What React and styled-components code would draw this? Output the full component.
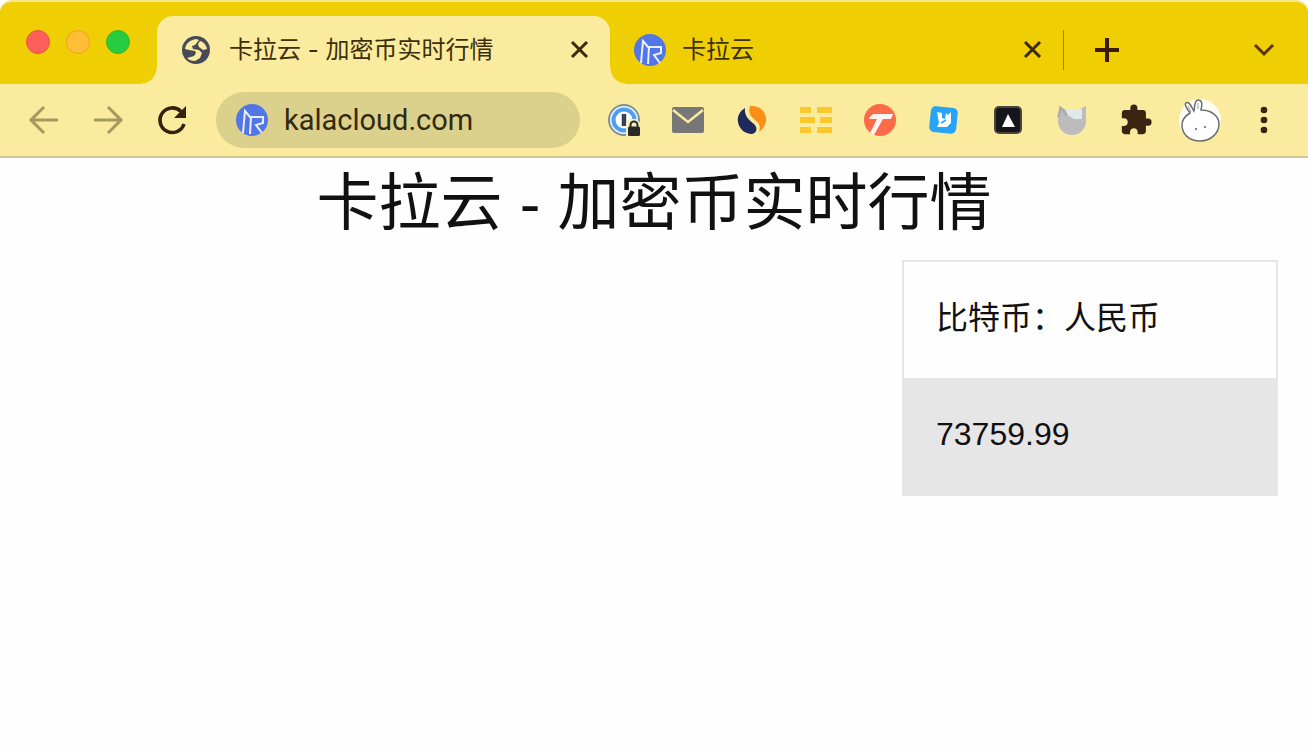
import styled, { createGlobalStyle } from "styled-components";
import { MdExtension } from "react-icons/md";

const extensions = [
    { name: "1Password", icon: <PasswordIcon /> },
    { name: "Mail", icon: <MailIcon /> },
    { name: "SimilarWeb", icon: <SwirlIcon /> },
    { name: "Stripes", icon: <StripesIcon /> },
    { name: "Toby", icon: <RoundTIcon /> },
    { name: "Notes", icon: <BlueNoteIcon /> },
    { name: "Vercel", icon: <BlackTileIcon /> },
    { name: "Cat", icon: <CatIcon /> },
    { name: "Extensions", icon: <MdExtension size={34} color="#3a2412" /> },
    { name: "Profile", icon: <RabbitIcon /> },
    { name: "Menu", icon: <DotsIcon /> },
];

export default function App() {
    return <Browser>
                <GlobalStyle />

                <TabStrip>
                    <WindowButtons>
                        <WindowButton aria-label="Close window" $fill="#ff5f5a" $edge="#e8543c" />
                        <WindowButton aria-label="Minimize window" $fill="#ffbd38" $edge="#eda21c" />
                        <WindowButton aria-label="Zoom window" $fill="#27cb3f" $edge="#3fb51c" />
                    </WindowButtons>
                    <Tab $active>
                        <GlobeIcon />
                        <TabTitle>卡拉云 - 加密币实时行情</TabTitle>
                        <TabClose aria-label="Close tab"><CrossIcon /></TabClose>
                    </Tab>
                    <Tab>
                        <KalaIcon />
                        <TabTitle>卡拉云</TabTitle>
                        <TabClose aria-label="Close tab"><CrossIcon /></TabClose>
                    </Tab>
                    <StripButton aria-label="New tab"><PlusIcon /></StripButton>
                    <StripButton aria-label="Search tabs" $last><ChevronIcon /></StripButton>
                </TabStrip>

                <Toolbar>
                    <ToolButton aria-label="Back"><ArrowIcon /></ToolButton>
                    <ToolButton aria-label="Forward"><ArrowIcon forward /></ToolButton>
                    <ToolButton aria-label="Reload"><ReloadIcon /></ToolButton>
                    <AddressBar>
                        <KalaIcon />
                        <input type="text" aria-label="Address" defaultValue="kalacloud.com" />
                    </AddressBar>
                    {extensions.map((ext) => (
                        <ToolButton key={ext.name} aria-label={ext.name}>{ext.icon}</ToolButton>
                    ))}
                </Toolbar>

                <Page>
                    <Title>卡拉云 - 加密币实时行情</Title>
                    <PriceCard>
                        <CardHeader>比特币：人民币</CardHeader>
                        <CardValue>73759.99</CardValue>
                    </PriceCard>
                </Page>
    </Browser>
}

function GlobeIcon() {
    return <svg width="32" height="32" viewBox="0 0 32 32">
                <circle cx="15" cy="16" r="14" fill="#474b58" />
                <path d="M4 15C5 9 9 6 15 5l3 1-4 5-3 1 1 3 6 1 3 3-2 5-5 3c-4 0-6-1-8-3l7-2 2-3-1-2-6-1z" fill="#fbeb9f" />
                <path d="M19 7c4 1 6 4 7 8l-4 1-4-3-1-3z" fill="#fbeb9f" />
    </svg>
}

function KalaIcon() {
    return <svg width="32" height="32" viewBox="0 0 32 32">
                <circle cx="16" cy="16" r="16" fill="#5276e6" />
                <path d="M7 29L9 7l5 6h13v6l-7 2 6 8M15 13l-1 17" fill="none" stroke="#e9effc" strokeWidth="2" />
    </svg>
}

function CrossIcon() {
    return <svg width="20" height="20" viewBox="0 0 20 20">
                <path d="M2 2l15 15M17 2L2 17" stroke="#3d2a0a" strokeWidth="3" />
    </svg>
}

function PlusIcon() {
    return <svg width="24" height="24" viewBox="0 0 24 24">
                <path d="M12 0v24M0 12h24" stroke="#3a1c08" strokeWidth="4" />
    </svg>
}

function ChevronIcon() {
    return <svg width="24" height="24" viewBox="0 0 24 24">
                <path d="M3 7l9 9 9-9" fill="none" stroke="#5a3304" strokeWidth="3" />
    </svg>
}

function ArrowIcon({ forward }) {
    return <svg width="32" height="32" viewBox="0 0 32 32">
                <path
                    d={forward ? "M2 16h26M16 3l13 13-13 13" : "M30 16H4M16 3L3 16l13 13"}
                    fill="none" stroke="#a5985c" strokeWidth="3"
                />
    </svg>
}

function ReloadIcon() {
    return <svg width="32" height="32" viewBox="0 0 32 32">
                <path d="M28 20A12.3 12.3 0 1 1 25 7.5" fill="none" stroke="#33220d" strokeWidth="3.6" />
                <path d="M30 2v12H18z" fill="#33220d" />
    </svg>
}

function PasswordIcon() {
    return <svg width="32" height="32" viewBox="0 0 32 32">
                <circle cx="16" cy="16" r="15" fill="#eef3fb" stroke="#7d9398" strokeWidth="2" />
                <circle cx="16" cy="16" r="10.5" fill="#fff" stroke="#4b9df5" strokeWidth="4" />
                <path d="M16 10v12" stroke="#39424c" strokeWidth="4.5" />
                <path d="M18 19l3-4h8l3 4v13H18z" fill="#f5edc4" />
                <path d="M22.5 23v-2a3.5 3.5 0 0 1 7 0v2" fill="none" stroke="#2c2a26" strokeWidth="2" />
                <rect x="20" y="22.5" width="12" height="9.5" rx="1.5" fill="#2c2a26" />
    </svg>
}

function MailIcon() {
    return <svg width="32" height="26" viewBox="0 0 32 26">
                <rect width="32" height="26" rx="2" fill="#777" />
                <path d="M1 3l15 12L31 3" fill="none" stroke="#fbeb9f" strokeWidth="2.5" />
    </svg>
}

function SwirlIcon() {
    return <svg width="30" height="30" viewBox="0 0 30 30">
                <path d="M8 3C3 6 0 11 1 17c1 7 7 12 14 12 5-1 6-6 2-10-5-4-10-8-9-16z" fill="#1f2a5c" />
                <path d="M13 1c11-1 17 7 16 15-1 5-4 9-7 11 2-6 0-9-4-12-5-4-7-8-5-14z" fill="#fb8f17" />
    </svg>
}

function StripesIcon() {
    return <svg width="34" height="28" viewBox="0 0 34 28">
                <path d="M1 4h11M18 4h15M1 14h15M21 14h12M1 24h11M18 24h15" stroke="#fbc82c" strokeWidth="6" />
    </svg>
}

function RoundTIcon() {
    return <svg width="32" height="32" viewBox="0 0 32 32">
                <circle cx="16" cy="16" r="16" fill="#fb6b47" />
                <path d="M5 14l4-4h20l-2 5h-8L10 31l-4-2 7-14H5z" fill="#fdf3ee" />
    </svg>
}

function BlueNoteIcon() {
    return <svg width="32" height="32" viewBox="0 0 32 32">
                <rect x="2" y="3" width="27" height="26" rx="5" fill="#27a4f6" transform="rotate(6 16 16)" />
                <path d="M9 8l5 1v5l3 1 1-6 2 2 3-3v11l-4 4H9l2-4z" fill="#fff" />
                <path d="M13 19l5-3" stroke="#27a4f6" strokeWidth="1.5" />
    </svg>
}

function BlackTileIcon() {
    return <svg width="28" height="28" viewBox="0 0 28 28">
                <rect x="1" y="1" width="26" height="26" rx="4" fill="#15151b" stroke="#4a4639" strokeWidth="2" />
                <path d="M14 8l7 13H8z" fill="#fff" />
    </svg>
}

function CatIcon() {
    return <svg width="32" height="32" viewBox="0 0 32 32">
                <path d="M3 2l7 4h12l8-4v15a14 14 0 0 1-28 0z" fill="#bdbcbd" />
                <path d="M10 5h16v10h-8l-8-5z" fill="#dfe8ea" />
                <path d="M2 13l3-9 6 7" fill="none" stroke="#a9aaa6" strokeWidth="2" />
    </svg>
}

function RabbitIcon() {
    return <svg width="44" height="44" viewBox="0 0 44 44">
                <circle cx="22" cy="22" r="21" fill="#fffdf4" />
                <path
                    d="M12 15C9 11 6 6 8 5c3-2 5 3 8 8 1-4 0-11 4-11 5 0 4 6 3 10 9 0 18 5 18 14S33 43 22 43 4 36 4 27c0-5 3-9 8-12z"
                    fill="#fff" stroke="#6b6e70" strokeWidth="1.5"
                />
                <path d="M10 8l3 6M20 5v6" stroke="#9a9c9d" strokeWidth="1" />
                <circle cx="18" cy="31" r="1.2" fill="#888" />
                <circle cx="27" cy="29" r="1.2" fill="#888" />
    </svg>
}

function DotsIcon() {
    return <svg width="8" height="28" viewBox="0 0 8 28">
                <g fill="#3a2412">
                    <circle cx="4" cy="4" r="3.3" />
                    <circle cx="4" cy="14" r="3.3" />
                    <circle cx="4" cy="24" r="3.3" />
                </g>
    </svg>
}

const GlobalStyle = createGlobalStyle`
    * {
        box-sizing: border-box;
    }

    body {
        margin: 0;
        background-color: #fefefe;
        font-family: 'Liberation Sans', 'Noto Sans CJK SC', sans-serif;
        color: #111111;
    }

    button {
        border: none;
        padding: 0;
        background: none;
    }

    svg {
        display: block;
        flex-shrink: 0;
    }
`

const Browser = styled.div`
    min-height: 100vh;
    display: flex;
    flex-direction: column;
`

const TabStrip = styled.div`
    height: 84px;
    display: flex;
    align-items: flex-end;
    background-color: #f0ce04;
    border-top: 2px solid #f7e68c;
    border-radius: 12px 12px 0 0;
`

const WindowButtons = styled.div`
    display: flex;
    align-items: center;
    align-self: stretch;
    gap: 16px;
    width: 157px;
    padding: 0 0 2px 26px;
    flex-shrink: 0;
`

const WindowButton = styled.button`
    width: 24px;
    height: 24px;

    && {
        border: 1px solid ${(props) => props.$edge};
        border-radius: 50%;
        background-color: ${(props) => props.$fill};
    }
`

const Tab = styled.div`
    position: relative;
    flex: 0 1 453px;
    min-width: 0;
    height: 68px;
    display: flex;
    align-items: center;
    gap: 16px;
    padding: 0 20px 0 24px;
    border-radius: 16px 16px 0 0;
    background-color: ${(props) => props.$active ? "#fbeb9f" : "transparent"};

    &::before,
    &::after {
        content: "";
        display: ${(props) => props.$active ? "block" : "none"};
        position: absolute;
        bottom: 0;
        width: 16px;
        height: 16px;
    }

    &::before {
        right: 100%;
        background: radial-gradient(circle at 0 0, transparent 15px, #fbeb9f 16px);
    }

    &::after {
        left: 100%;
        background: radial-gradient(circle at 100% 0, transparent 15px, #fbeb9f 16px);
    }
`

const TabTitle = styled.span`
    flex: 1;
    min-width: 0;
    overflow: hidden;
    white-space: nowrap;
    font-family: Inter, 'Noto Sans CJK SC', sans-serif;
    font-size: 24px;
    line-height: 36px;
    color: #3d2f0a;
`

const TabClose = styled.button`
    flex-shrink: 0;
`

const StripButton = styled.button`
    width: 88px;
    height: 68px;
    display: flex;
    align-items: center;
    justify-content: center;
    flex-shrink: 0;
    margin-left: ${(props) => props.$last ? "auto" : "0"};

    &:not(:last-child) {
        position: relative;
    }

    &:not(:last-child)::before {
        content: "";
        position: absolute;
        left: 0;
        top: 14px;
        width: 1px;
        height: 40px;
        background-color: #a57f0c;
    }
`

const Toolbar = styled.div`
    height: 74px;
    display: flex;
    align-items: center;
    padding: 0 12px;
    background-color: #fbeb9f;
    border-bottom: 2px solid #cdca98;
`

const ToolButton = styled.button`
    width: 64px;
    height: 56px;
    display: flex;
    align-items: center;
    justify-content: center;
    flex-shrink: 0;
`

const AddressBar = styled.label`
    flex: 1;
    min-width: 0;
    height: 56px;
    margin: 0 12px;
    padding: 0 20px;
    display: flex;
    align-items: center;
    gap: 16px;
    border-radius: 28px;
    background-color: #dbd18c;

    input {
        flex: 1;
        min-width: 0;
        border: none;
        padding: 0;
        outline: none;
        background: none;
        font-family: Roboto, sans-serif;
        font-size: 29px;
        color: #33290f;
    }
`

const Page = styled.main`
    display: flex;
    flex-direction: column;
`

const Title = styled.h1`
    margin: 0;
    text-align: center;
    font-weight: 400;
    font-size: 62px;
    line-height: 92px;
`

const PriceCard = styled.section`
    align-self: flex-end;
    width: 376px;
    max-width: 100%;
    margin: 10px 30px 30px;
    border: 2px solid #e6e6e6;
    font-size: 32px;
    line-height: 48px;
`

const CardHeader = styled.div`
    padding: 32px 32px 36px;
    background-color: #fefefe;
`

const CardValue = styled.div`
    padding: 32px 32px 36px;
    background-color: #e6e6e6;
`
